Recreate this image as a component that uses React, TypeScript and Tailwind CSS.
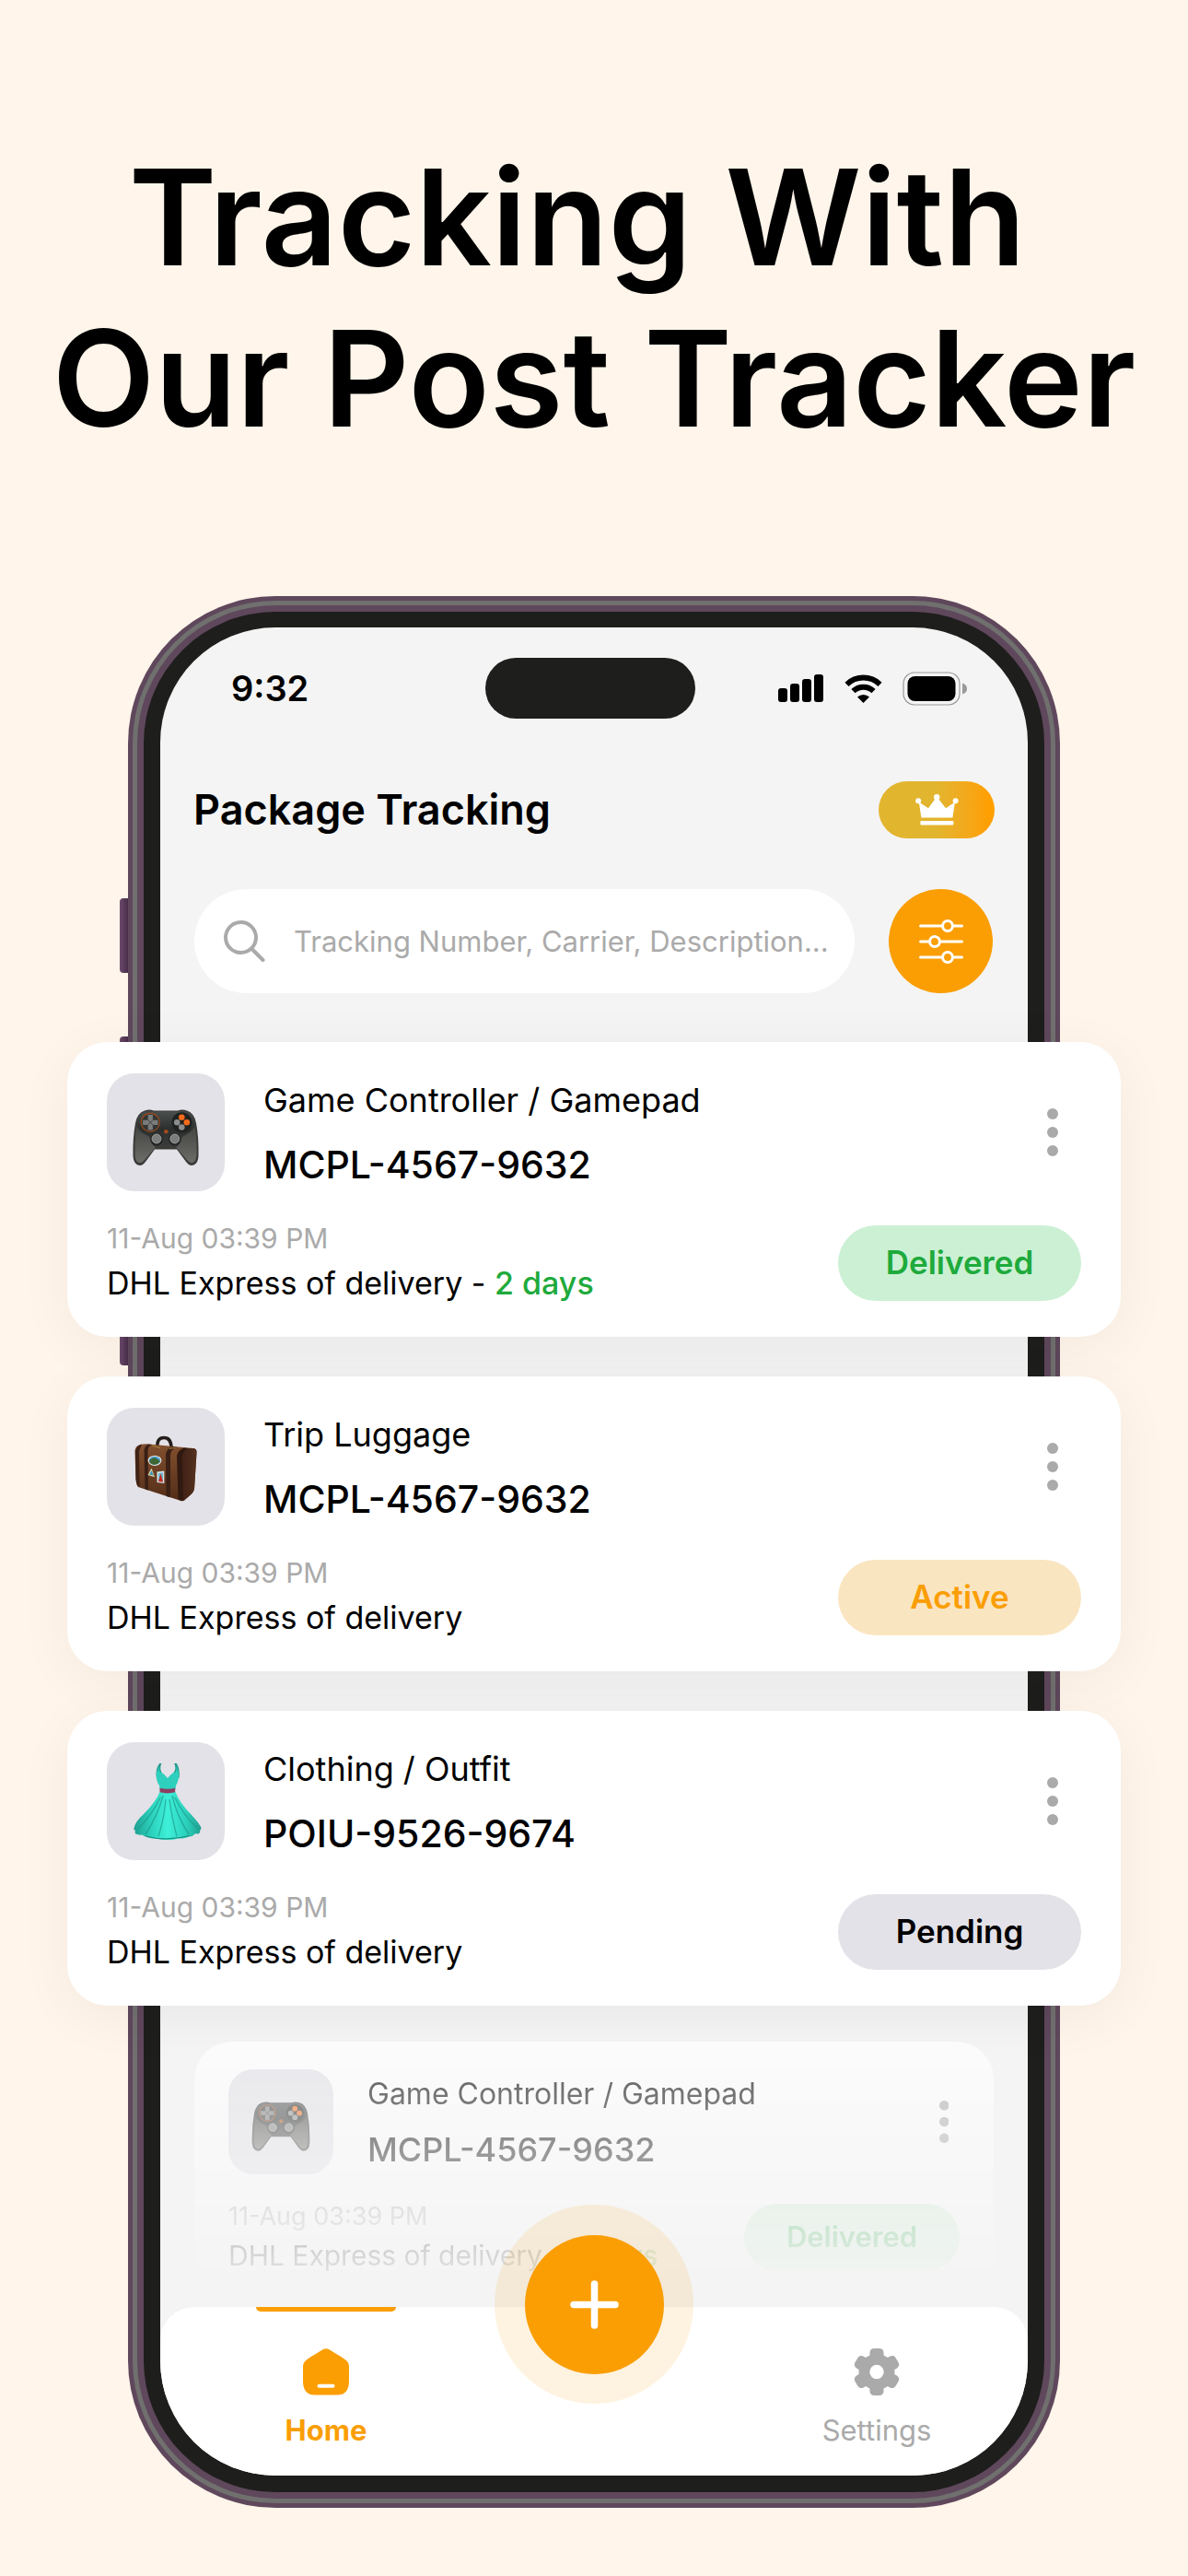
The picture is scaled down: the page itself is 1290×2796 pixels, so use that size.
import { useState } from 'react'
import type { ReactNode } from 'react'

type Status = 'Delivered' | 'Active' | 'Pending'
type Kind = 'gamepad' | 'luggage' | 'dress'

type Parcel = {
  id: number
  kind: Kind
  name: string
  code: string
  date: string
  carrier: string
  eta?: string
  status: Status
}

const parcels: Parcel[] = [
  {
    id: 1,
    kind: 'gamepad',
    name: 'Game Controller / Gamepad',
    code: 'MCPL-4567-9632',
    date: '11-Aug 03:39 PM',
    carrier: 'DHL Express of delivery',
    eta: '2 days',
    status: 'Delivered',
  },
  {
    id: 2,
    kind: 'luggage',
    name: 'Trip Luggage',
    code: 'MCPL-4567-9632',
    date: '11-Aug 03:39 PM',
    carrier: 'DHL Express of delivery',
    status: 'Active',
  },
  {
    id: 3,
    kind: 'dress',
    name: 'Clothing / Outfit',
    code: 'POIU-9526-9674',
    date: '11-Aug 03:39 PM',
    carrier: 'DHL Express of delivery',
    status: 'Pending',
  },
]

const badgeColors: Record<Status, string> = {
  Delivered: 'bg-[#ccf0d4] text-[#1eaa3c]',
  Active: 'bg-[#fae5c1] text-[#fa9e04]',
  Pending: 'bg-[#e3e2e8] text-black',
}

function GamepadIcon() {
  return (
    <>
      <defs>
        <linearGradient id="padBody" x1="0" y1="0" x2="0" y2="1">
          <stop offset="0" stopColor="#4a4f4d" />
          <stop offset="0.5" stopColor="#2b2e2d" />
          <stop offset="1" stopColor="#3c3d3b" />
        </linearGradient>
        <linearGradient id="padGrip" x1="0" y1="0" x2="0" y2="1">
          <stop offset="0" stopColor="#444643" />
          <stop offset="1" stopColor="#6c6c68" />
        </linearGradient>
      </defs>
      <path
        d="M19 18.5 Q24 16.5 29 18.5 H55 Q60 16.5 65 18.5 Q73 21 75 32 Q78 48 77.5 68 Q77 77.5 70 78 Q67 78 64 74 L54 60.5 H30 L20 74 Q17 78 14 78 Q7 77.5 6.5 68 Q6 48 9 32 Q11 21 19 18.5Z"
        fill="#3a3b39"
      />
      <path d="M10 36 Q16 45 26 47 L31 58 L19 72 Q15 77 11 74 Q8.5 71 8.5 65 Q8.5 48 10 36Z" fill="url(#padGrip)" />
      <path d="M74 36 Q68 45 58 47 L53 58 L65 72 Q69 77 73 74 Q75.5 71 75.5 65 Q75.5 48 74 36Z" fill="url(#padGrip)" />
      <path d="M20 19.5 H64 Q73 22 73 33 Q71 42 61 45 L55 57 Q53 59 50 58.5 H34 Q31 59 29 57 L23 45 Q13 42 11 33 Q11 22 20 19.5Z" fill="url(#padBody)" />
      <circle cx="25.3" cy="31.3" r="10" fill="#333634" stroke="#9a4a1e" strokeWidth="1.2" />
      <path d="M22.7 23 h5.2 v5.7 h5.6 v5.2 h-5.6 v5.7 h-5.2 v-5.7 h-5.6 v-5.2 h5.6z" fill="#797c7a" />
      <path d="M22.7 28.7 l5.2 5.2 M27.9 28.7 l-5.2 5.2" stroke="#3f4240" strokeWidth="1" />
      <circle cx="59.5" cy="31.3" r="11" fill="#1f2221" />
      <circle cx="59.3" cy="25.7" r="3.3" fill="#f26a1b" />
      <circle cx="64.8" cy="31.3" r="3.3" fill="#f26a1b" />
      <circle cx="54.2" cy="31.3" r="3.3" fill="#8b8e8d" />
      <circle cx="59.3" cy="36.5" r="3.3" fill="#8b8e8d" />
      <circle cx="42.3" cy="41.3" r="2.3" fill="#a34b1b" />
      <circle cx="32" cy="49.7" r="6.8" fill="#202322" />
      <circle cx="51.8" cy="49.7" r="6.8" fill="#202322" />
      <circle cx="32" cy="49" r="5" fill="#7a7d7c" stroke="#a5a8a7" strokeWidth="0.8" />
      <circle cx="51.8" cy="49" r="5" fill="#7a7d7c" stroke="#a5a8a7" strokeWidth="0.8" />
    </>
  )
}

function LuggageIcon() {
  return (
    <>
      <defs>
        <linearGradient id="caseFront" x1="0" y1="0" x2="0" y2="1">
          <stop offset="0" stopColor="#82502f" />
          <stop offset="1" stopColor="#532d18" />
        </linearGradient>
        <linearGradient id="caseSide" x1="0" y1="0" x2="1" y2="0">
          <stop offset="0" stopColor="#3c1f13" />
          <stop offset="1" stopColor="#54301f" />
        </linearGradient>
      </defs>
      <path d="M33 21 Q32 10.5 40 10.5 Q48 10.5 48 22" fill="none" stroke="#241d1b" strokeWidth="3.6" strokeLinecap="round" />
      <path d="M12 19 Q16 16.5 24 17.5 L72 22 Q76 22.5 75.5 27 L73 66 Q72.5 69 70 71.5 L62 78.5 Q60 80 57 78.5 L12 64 Q10 62 9.5 55 L8.5 26 Q8.5 20.5 12 19Z" fill="url(#caseFront)" />
      <path d="M57 30 Q58 23.5 66 22 L72 22 Q76 22.5 75.5 27 L73 66 Q72.5 69 70 71.5 L62 78.5 Q58.5 80 57 78Z" fill="url(#caseSide)" />
      <path d="M9 25 Q10 19 16 17.5 L13 25 L13.5 64 L11 62 Q9.5 58 9.5 55Z" fill="#3f2216" />
      <path d="M18.5 24 Q19 19.5 23 17.5 L27 18 Q22.5 20 22.5 25 L23 67.5 L19.5 66.3Z" fill="#3a2015" />
      <path d="M42 28 Q43 22 50 20 L54 20.5 Q47.5 23 47 29 L47 75.3 L42.5 74Z" fill="#3a2015" />
      <path d="M54 30 Q55 24 62 21.5 L66 22 Q60 25 59.5 31 L61 78 L55.5 77.5Z" fill="#2f1910" />
      <path d="M27 19 L36 21.5 M46 22.5 L53 21" stroke="#a8823f" strokeWidth="1" />
      <ellipse cx="30" cy="35.3" rx="7.4" ry="5.6" fill="#e8e6dc" />
      <ellipse cx="30" cy="35.3" rx="6.2" ry="4.5" fill="#4ea0d2" />
      <path d="M24 36 Q27 31.5 31 32.5 Q34 34 36 36.5 Q33 40 29 39.7 Q25 39 24 36Z" fill="#3d6634" />
      <path d="M26.5 43.5 L30 53.3 L22.5 51Z" fill="#d9d2a4" />
      <path d="M26.5 46 L28.7 51.5 L24.2 50.5Z" fill="#3a95b8" />
      <path d="M32.4 47.5 L40.3 46.5 V60 L32.6 59Z" fill="#d7e3e6" />
      <path d="M34 48.9 L39 48.3 V58.5 L34 58Z" fill="#6fb3cc" />
      <path d="M36.5 49.5 L39 58.5 L34 58Z" fill="#c4281e" />
    </>
  )
}

function DressIcon() {
  return (
    <>
      <defs>
        <linearGradient id="skirt" x1="0" y1="0" x2="1" y2="0">
          <stop offset="0" stopColor="#1f9f90" />
          <stop offset="0.25" stopColor="#2bd0bc" />
          <stop offset="0.5" stopColor="#3ef0d8" />
          <stop offset="0.78" stopColor="#2bd0bc" />
          <stop offset="1" stopColor="#1f9f90" />
        </linearGradient>
      </defs>
      <path d="M35.5 1.5 Q31 8 32.5 16 L38 13 Q34 7 36.5 1.5Z M52 1.5 Q55 7 50 13 L56 16 Q57 8 53.5 1.5Z" fill="#2bcbb8" stroke="#1c9486" strokeWidth="1.2" />
      <path d="M32 9 Q35 12 37 10.5 Q41 13 44 17 Q47 13 51 10.5 Q53 12 56 9 Q57 19 53 25 L52.5 29 H35.5 L35 25 Q30.5 19 32 9Z" fill="#2ed0bd" />
      <path
        d="M35.5 32 H52.5 Q57 44 70 57 Q79 67 80.5 71 Q80 74 79 73 Q80 76 77.5 77.5 Q74 77 73 78 Q71 81 66.5 80.5 Q63 83 55 82.5 Q50 84.5 44 84 Q37 84.5 33 82.5 Q25 83 21 80.5 Q18 80.5 16.5 78.5 Q12 79 9.5 77.5 Q8 77 9 73.5 Q7 74 7.5 71 Q9 64 18 56 Q31 43 35.5 32Z"
        fill="url(#skirt)"
      />
      <path d="M39 36 Q34 56 20 78 M36 38 Q28 56 11 73 M49 36 Q54 58 67 78 M52 38 Q60 56 77 72 M42 40 Q40 62 34 80 M46 40 Q49 62 54 80" fill="none" stroke="#1b9888" strokeWidth="1.4" opacity="0.65" />
      <path d="M20 80 Q31 83 44 82.8 Q56 82.5 68 79.5" fill="none" stroke="#1b8a7d" strokeWidth="1.2" />
      <path d="M35.5 27.7 Q44 30 52.2 27.7 V32.3 Q44 34.6 35.5 32.3Z" fill="#8d3f63" />
    </>
  )
}

const drawings: Record<Kind, ReactNode> = {
  gamepad: <GamepadIcon />,
  luggage: <LuggageIcon />,
  dress: <DressIcon />,
}

function MoreButton({ small }: { small?: boolean }) {
  return (
    <button
      type="button"
      aria-label="More"
      className={`flex items-center justify-center self-center ${small ? 'w-[34px]' : 'w-[62px]'}`}
    >
      <svg viewBox="0 0 12 52" className={small ? 'h-[46px]' : 'h-[52px]'} fill="#aaaaaa">
        <circle cx="6" cy="6" r="6" />
        <circle cx="6" cy="26" r="6" />
        <circle cx="6" cy="46" r="6" />
      </svg>
    </button>
  )
}

function ParcelCard({ parcel }: { parcel: Parcel }) {
  return (
    <article className="relative rounded-[44px] bg-white px-[43px] pt-[34px] pb-9 shadow-[0_12px_60px_rgba(0,0,0,0.05)]">
      <div className="flex">
        <div className="flex size-32 items-center justify-center rounded-[30px] bg-[#e3e2e8]">
          <svg viewBox="0 0 84 84" className="size-[84px]">{drawings[parcel.kind]}</svg>
        </div>
        <div className="ml-[42px] flex-1 pt-1.5">
          <h2 className="text-[36px] leading-[46px]">{parcel.name}</h2>
          <p className="mt-[22px] text-[41px] leading-[51px] font-medium">{parcel.code}</p>
        </div>
        <MoreButton />
      </div>
      <div className="mt-[33px] flex items-center justify-between">
        <div>
          <p className="text-[30px] leading-9 text-[#aaaaaa]">{parcel.date}</p>
          <p className="mt-[9px] text-[34px] leading-[44px]">
            {parcel.carrier}
            {parcel.eta && <> - <span className="font-medium text-[#1eaa3c]">{parcel.eta}</span></>}
          </p>
        </div>
        <span className={`flex h-[82px] w-[264px] items-center justify-center rounded-full text-[35px] font-semibold ${badgeColors[parcel.status]}`}>
          {parcel.status}
        </span>
      </div>
    </article>
  )
}

/** Card at the end of the list, fading out behind the tab bar */
function FadingCard({ parcel }: { parcel: Parcel }) {
  return (
    <article className="mx-[37px] mt-[39px] rounded-[40px] bg-white mask-[linear-gradient(to_bottom,rgba(0,0,0,0.66),transparent)] px-[37px] pt-[30px] pb-8">
      <div className="flex">
        <div className="flex size-[114px] items-center justify-center rounded-[27px] bg-[#e3e2e8]">
          <svg viewBox="0 0 84 84" className="size-[74px]">{drawings[parcel.kind]}</svg>
        </div>
        <div className="ml-[37px] flex-1 pt-1.5">
          <h2 className="text-[32px] leading-[41px]">{parcel.name}</h2>
          <p className="mt-[18px] text-[36px] leading-[45px] font-medium">{parcel.code}</p>
        </div>
        <MoreButton small />
      </div>
      <div className="mt-[29px] flex items-center justify-between">
        <div>
          <p className="text-[27px] leading-[33px] text-[#aaaaaa]">{parcel.date}</p>
          <p className="mt-[7px] text-[30px] leading-[39px]">
            {parcel.carrier} - <span className="font-medium text-[#1eaa3c]">{parcel.eta}</span>
          </p>
        </div>
        <span className={`flex h-[73px] w-[234px] items-center justify-center rounded-full text-[31px] font-semibold ${badgeColors[parcel.status]}`}>
          {parcel.status}
        </span>
      </div>
    </article>
  )
}

function StatusBar() {
  return (
    <div className="grid h-[66px] grid-cols-[353px_228px_1fr] items-center">
      <span className="pl-[77px] text-[38px] leading-[46px] font-semibold">9:32</span>
      <div className="h-full rounded-full bg-[#1e1e1c]" />
      <div className="flex items-center justify-end pr-[65px]">
        <svg viewBox="0 0 49 30" className="h-[30px] w-[49px]">
          <rect x="0" y="15" width="10" height="15" rx="3" />
          <rect x="13" y="10" width="10" height="20" rx="3" />
          <rect x="26" y="5" width="10" height="25" rx="3" />
          <rect x="39" y="0" width="10" height="30" rx="3" />
        </svg>
        <svg viewBox="0 0 41 31" className="ml-[23px] h-[31px] w-[41px]" fill="none" stroke="black">
          <path d="M2.5 10.8 A26 26 0 0 1 38.5 10.8" strokeWidth="6" />
          <path d="M9.5 18.2 A15.8 15.8 0 0 1 31.5 18.2" strokeWidth="6" />
          <path d="M20.5 31 L14 24.5 A9.5 9.5 0 0 1 27 24.5Z" fill="black" stroke="none" />
        </svg>
        <svg viewBox="0 0 71 37" className="ml-[22px] h-[37px] w-[71px]">
          <rect x="1" y="1" width="61" height="35" rx="12" fill="none" stroke="#999999" strokeWidth="1.2" />
          <rect x="5.5" y="5" width="52" height="27" rx="8" />
          <path d="M65 12.5 Q70 14 70 18.5 Q70 23 65 24.5Z" fill="#999999" />
        </svg>
      </div>
    </div>
  )
}

export default function App() {
  const [query, setQuery] = useState('')

  return (
    <main className="min-h-screen bg-[#fff5ea] pt-[148px] pb-[74px] font-['Inter','Liberation_Sans',sans-serif] text-black">
      <h1 className="text-center text-[145px] leading-[175px] font-semibold whitespace-nowrap">
        Tracking With&nbsp;
        <br />
        Our Post Tracker
      </h1>

      {/* phone frame, built from nested rings */}
      <div className="relative mx-[139px] mt-[149px]">
        <div className="absolute top-[328px] -left-[9px] h-[81px] w-3 rounded-l bg-linear-to-r from-[#6d4a6c] to-[#3c2540]" />
        <div className="absolute top-[478px] -left-[9px] h-[157px] w-3 rounded-l bg-linear-to-r from-[#6d4a6c] to-[#3c2540]" />
        <div className="absolute top-[678px] -left-[9px] h-[157px] w-3 rounded-l bg-linear-to-r from-[#6d4a6c] to-[#3c2540]" />
        <div className="relative rounded-[160px] bg-[#5f475c] p-[5px]">
          <div className="rounded-[155px] bg-[#70706f] p-[5px]">
            <div className="rounded-[150px] bg-[#5f475c] p-[7px]">
              <div className="rounded-[143px] bg-[#1e1e1c] p-[18px] pt-[17px]">
                <div className="rounded-[125px] bg-[#f4f4f4] pt-[33px]">
                  <StatusBar />

                  <header className="mt-[68px] flex items-center justify-between px-9">
                    <h2 className="text-[45px] leading-[58px] font-semibold">Package Tracking</h2>
                    <button
                      type="button"
                      aria-label="Premium"
                      className="flex h-[62px] w-[126px] items-center justify-center rounded-full bg-linear-to-r from-[#e2b52e] from-50% to-[#ff9f00] to-95%"
                    >
                      <svg viewBox="0 0 47 34" className="h-[34px] w-[47px]" fill="white">
                        <circle cx="3.2" cy="7.3" r="3" />
                        <circle cx="23.2" cy="3.2" r="3.2" />
                        <circle cx="43.6" cy="7.3" r="3" />
                        <path d="M3.8 8.5 L14 15.2 L21.5 5 H25 L33 15.2 L43 8.5 L40.4 25.5 H6.4Z" />
                        <rect x="5.4" y="29" width="36" height="4.5" rx="1" />
                      </svg>
                    </button>
                  </header>

                  <div className="mt-[55px] flex gap-[37px] pr-[38px] pl-[37px]">
                    <label className="flex h-[113px] min-w-0 flex-1 items-center rounded-full bg-white pr-4 pl-8">
                      <svg viewBox="0 0 45 45" className="size-[45px] shrink-0" fill="none" stroke="#aaaaaa" strokeWidth="4" strokeLinecap="round">
                        <circle cx="18.5" cy="18.5" r="16.5" />
                        <path d="M30.5 31 L42.5 43" />
                      </svg>
                      <input
                        type="text"
                        aria-label="Search packages"
                        value={query}
                        onChange={(e) => setQuery(e.target.value)}
                        placeholder="Tracking Number, Carrier, Description..."
                        className="ml-[31px] min-w-0 flex-1 text-[31px] leading-[42px] outline-none placeholder:text-[#aaaaaa]"
                      />
                    </label>
                    <button
                      type="button"
                      aria-label="Filters"
                      className="flex size-[113px] items-center justify-center rounded-full bg-[#fa9e04]"
                    >
                      <svg viewBox="0 0 48 48" className="size-12" fill="#fa9e04" stroke="white" strokeWidth="3" strokeLinecap="round">
                        <path d="M1.5 7 H46.5 M1.5 24 H46.5 M1.5 41 H46.5" />
                        <circle cx="31" cy="7" r="5.4" />
                        <circle cx="17" cy="24" r="5.4" />
                        <circle cx="31" cy="41" r="5.4" />
                      </svg>
                    </button>
                  </div>

                  {/* the cards are wider than the phone */}
                  <section className="-mx-[101px] mt-[53px] flex flex-col gap-[43px]">
                    {parcels.map((p) => (
                      <ParcelCard key={p.id} parcel={p} />
                    ))}
                  </section>

                  <FadingCard parcel={parcels[0]} />

                  <nav className="relative mt-1 flex h-[183px] justify-between rounded-t-[37px] rounded-b-[125px] bg-white pr-[88px] pl-[104px] text-[31px] leading-[39px]">
                    <a href="#home" className="flex w-[152px] flex-col items-center font-bold text-[#fa9e04]">
                      <span className="h-[5px] w-full rounded-b-full bg-[#fa9e04]" />
                      <svg viewBox="0 0 50 51" className="mt-10 h-[51px] w-[50px]">
                        <path
                          d="M21 1.5 Q25 -0.8 29 1.5 Q33 4 37 6.5 Q41 8.5 46 12.2 Q50 14.8 50 20 V36 Q50 43 46.5 47 Q43.5 50.5 37 50.5 H13 Q6.5 50.5 3.5 47 Q0 43 0 36 V20 Q0 14.8 4 12.2 Q9 8.5 13 6.5 Q17 4 21 1.5Z"
                          fill="#fa9e04"
                        />
                        <path d="M17.5 40.7 H32.5" stroke="white" strokeWidth="4" strokeLinecap="round" />
                      </svg>
                      <span className="mt-[18px]">Home</span>
                    </a>
                    <a href="#settings" className="flex w-[152px] flex-col items-center text-[#aaaaaa]">
                      <svg viewBox="0 0 50 51" className="mt-[45px] h-[51px] w-[50px]" fill="#aaaaaa">
                        <circle cx="25" cy="25.5" r="19.5" />
                        <rect x="17.5" y="0" width="15" height="51" rx="4.5" />
                        <rect x="17.5" y="0" width="15" height="51" rx="4.5" transform="rotate(60 25 25.5)" />
                        <rect x="17.5" y="0" width="15" height="51" rx="4.5" transform="rotate(120 25 25.5)" />
                        <circle cx="25" cy="25.5" r="7.7" fill="white" />
                      </svg>
                      <span className="mt-[18px]">Settings</span>
                    </a>
                    <button
                      type="button"
                      aria-label="Add package"
                      className="absolute -top-[111px] left-1/2 flex size-[216px] -translate-x-1/2 items-center justify-center rounded-full bg-[#fa9e04]/12"
                    >
                      <span className="flex size-[151px] items-center justify-center rounded-full bg-[#fa9e04]">
                        <svg viewBox="0 0 53 53" className="size-[53px]" stroke="white" strokeWidth="7.5" strokeLinecap="round">
                          <path d="M26.5 4 V49 M4 26.5 H49" />
                        </svg>
                      </span>
                    </button>
                  </nav>
                </div>
              </div>
            </div>
          </div>
        </div>
      </div>
    </main>
  )
}
